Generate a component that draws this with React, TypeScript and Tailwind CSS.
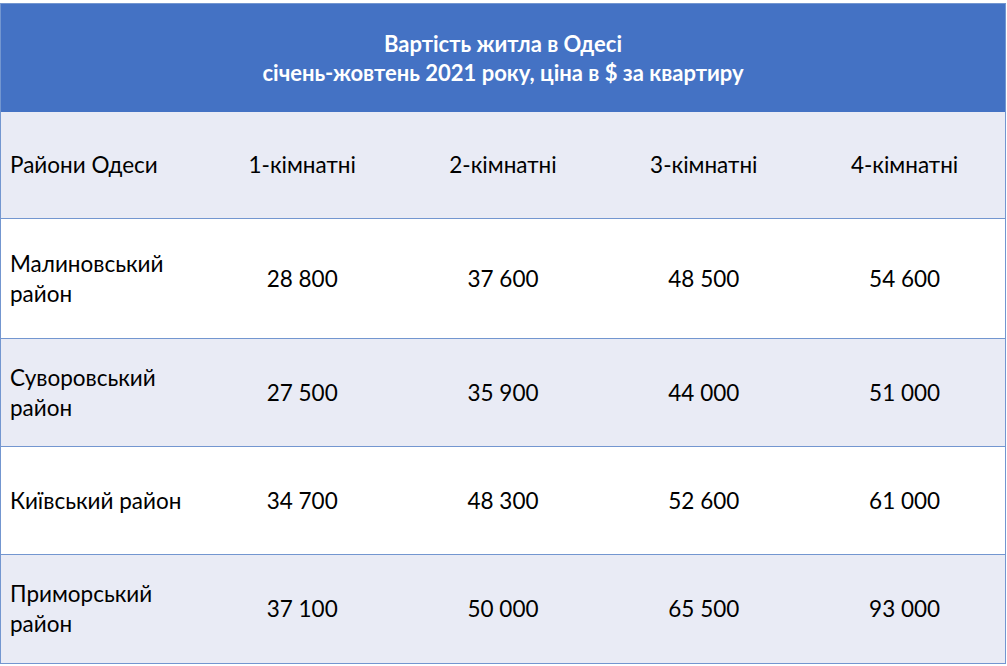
const rows = [
  { name: "Малиновський район", v: ["28 800", "37 600", "48 500", "54 600"], h: "h-[120px]", bg: "bg-white" },
  { name: "Суворовський район", v: ["27 500", "35 900", "44 000", "51 000"], h: "h-[108px]", bg: "bg-[#e9ebf5]" },
  { name: "Київський район", v: ["34 700", "48 300", "52 600", "61 000"], h: "h-[108px]", bg: "bg-white" },
  { name: "Приморський район", v: ["37 100", "50 000", "65 500", "93 000"], h: "h-[108px]", bg: "bg-[#e9ebf5]" },
]

const App = () => {
  return (
    <div className="w-[1007px] h-[666px] bg-white pt-[3px] font-['Lato','Liberation_Sans',sans-serif] text-[22.5px] text-black">
      <div className="w-[1006px] border border-[#7396d0]">
        <div className="h-[108px] bg-[#4472c4] flex flex-col items-center justify-center text-white font-bold leading-[29px] text-[22px]">
          <p>Вартість житла в Одесі</p>
          <p>січень-жовтень 2021 року, ціна в $ за квартиру</p>
        </div>
        <div className="h-[107px] bg-[#e9ebf5] grid grid-cols-5 items-center border-b border-[#7396d0]">
          <p className="pl-[9px]">Райони Одеси</p>
          <p className="text-center">1-кімнатні</p>
          <p className="text-center">2-кімнатні</p>
          <p className="text-center">3-кімнатні</p>
          <p className="text-center">4-кімнатні</p>
        </div>
        {rows.map((r, i) => (
          <div key={i} className={`${r.h} ${r.bg} grid grid-cols-5 items-center ${i < rows.length - 1 ? "border-b border-[#7396d0]" : ""}`}>
            <p className="pl-[9px] pr-[20px] leading-[30px]">{r.name}</p>
            {r.v.map((x, j) => (
              <p key={j} className="text-center">{x}</p>
            ))}
          </div>
        ))}
      </div>
    </div>
  )
}

export default App
